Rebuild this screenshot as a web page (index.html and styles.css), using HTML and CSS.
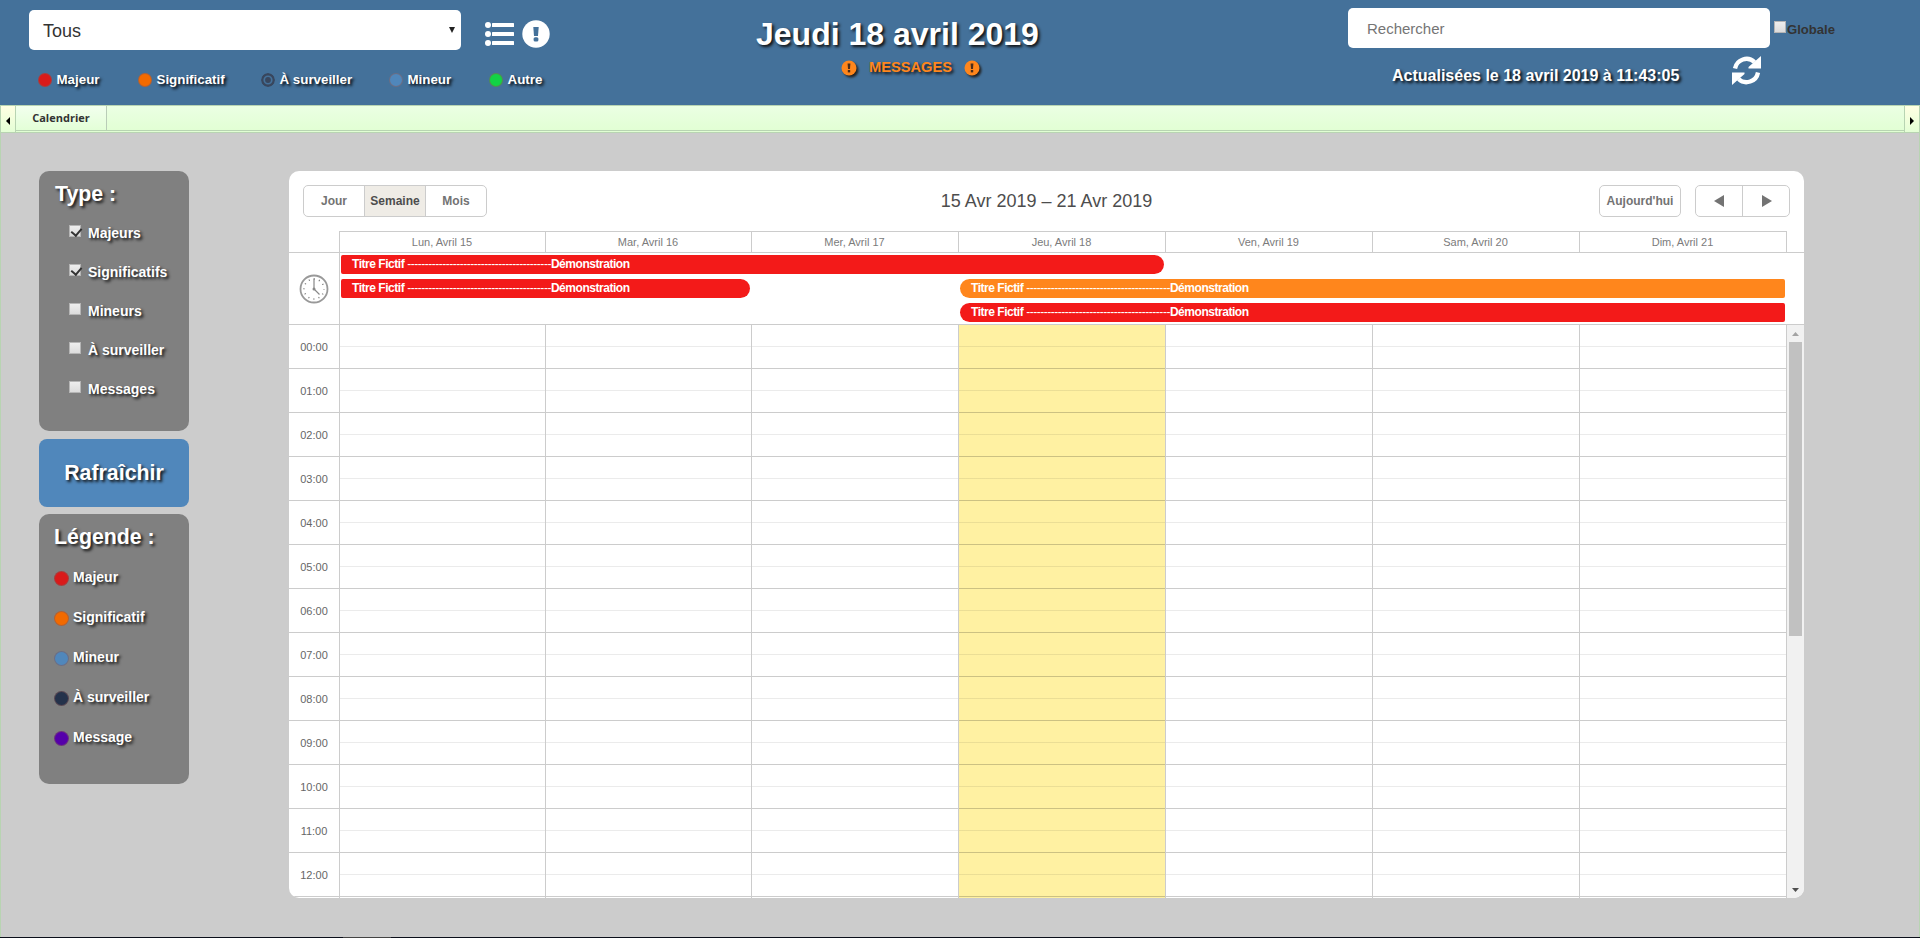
FILE: index.html
```html
<!DOCTYPE html>
<html lang="fr">
<head>
<meta charset="utf-8">
<title>Calendrier</title>
<link rel="stylesheet" href="styles.css">
</head>
<body>
<header class="header">
  <div class="filters">
    <div class="filter-row">
      <div class="select">Tous<svg class="caret" viewBox="0 0 6 6"><path d="M0 0h6L3 6z"/></svg></div>
      <svg class="icon-list" viewBox="0 0 29 24" fill="#fff"><circle cx="3" cy="3" r="3"/><circle cx="3" cy="12" r="3"/><circle cx="3" cy="21" r="3"/><rect x="7" y="1" width="22" height="4" rx=".5"/><rect x="7" y="10" width="22" height="4" rx=".5"/><rect x="7" y="19" width="22" height="4" rx=".5"/></svg>
      <svg class="icon-alert" viewBox="0 0 28 28"><circle cx="14" cy="14" r="13.700" fill="#fff"/><path fill="#44719a" d="M11.300 7h5.400l-.7 9h-4z"/><rect x="11.600" y="17.300" width="4.800" height="4.200" rx="1.500" fill="#44719a"/></svg>
    </div>
    <div class="keys">
      <span class="key"><i class="dot red"></i>Majeur</span>
      <span class="key"><i class="dot orange"></i>Significatif</span>
      <span class="key"><svg class="dot target" viewBox="0 0 14 14"><circle cx="7" cy="7" r="5.800" fill="none" stroke="#38465d" stroke-width="2.400"/><circle cx="7" cy="7" r="2.900" fill="#38465d"/></svg>À surveiller</span>
      <span class="key"><i class="dot blue"></i>Mineur</span>
      <span class="key"><i class="dot green"></i>Autre</span>
    </div>
  </div>
  <div class="heading">
    <h1>Jeudi 18 avril 2019</h1>
    <div class="messages">
      <svg class="badge" viewBox="0 0 16 16"><circle cx="8" cy="8" r="7.5" fill="#ff861c"/><path fill="#4a2c1a" d="M6.600 3.500h2.800L9 9H7z"/><rect x="6.800" y="10" width="2.400" height="2.400" fill="#4a2c1a"/></svg>
      <span>MESSAGES</span>
      <svg class="badge" viewBox="0 0 16 16"><circle cx="8" cy="8" r="7.5" fill="#ff861c"/><path fill="#4a2c1a" d="M6.600 3.500h2.800L9 9H7z"/><rect x="6.800" y="10" width="2.400" height="2.400" fill="#4a2c1a"/></svg>
    </div>
  </div>
  <div class="search">
    <div class="search-row"><div class="input">Rechercher</div><i class="check"></i><span class="globale">Globale</span></div>
    <div class="updated"><span>Actualisées le 18 avril 2019 à 11:43:05</span>
      <svg class="icon-refresh" viewBox="0 0 29 29" fill="none"><path d="M3 12.500A11.700 11.700 0 0 1 22.500 6M26 16.500A11.700 11.700 0 0 1 6.500 23" stroke="#fff" stroke-width="4.300"/><path d="M29 0v12.500H16.500V11zM0 29V16.500h12.500V18z" fill="#fff"/></svg>
    </div>
  </div>
</header>
<nav class="tabs">
  <div class="scroller"><svg viewBox="0 0 4 8"><path d="M4 0v8L0 4z"/></svg></div>
  <div class="tab">Calendrier</div>
  <div class="tab-space"></div>
  <div class="scroller end"><svg viewBox="0 0 4 8"><path d="M0 0v8l4-4z"/></svg></div>
</nav>
<main class="content">
  <aside class="sidebar">
    <section class="panel types">
      <h2>Type :</h2>
      <label><i class="check on"></i>Majeurs</label>
      <label><i class="check on"></i>Significatifs</label>
      <label><i class="check"></i>Mineurs</label>
      <label><i class="check"></i>À surveiller</label>
      <label><i class="check"></i>Messages</label>
    </section>
    <div class="refresh">Rafraîchir</div>
    <section class="panel legend">
      <h2>Légende :</h2>
      <div class="item"><i class="dot red"></i>Majeur</div>
      <div class="item"><i class="dot orange"></i>Significatif</div>
      <div class="item"><i class="dot blue"></i>Mineur</div>
      <div class="item"><i class="dot navy"></i>À surveiller</div>
      <div class="item"><i class="dot purple"></i>Message</div>
    </section>
  </aside>
  <section class="calendar">
    <div class="toolbar">
      <div class="group views"><span>Jour</span><span class="active">Semaine</span><span>Mois</span></div>
      <div class="range">15 Avr 2019 – 21 Avr 2019</div>
      <div class="nav">
        <div class="group today-btn"><span>Aujourd'hui</span></div>
        <div class="group arrows"><span><svg viewBox="0 0 10 12"><path d="M10 0v12L0 6z"/></svg></span><span><svg viewBox="0 0 10 12"><path d="M0 0v12l10-6z"/></svg></span></div>
      </div>
    </div>
    <div class="days"><span></span><span>Lun, Avril 15</span><span>Mar, Avril 16</span><span>Mer, Avril 17</span><span>Jeu, Avril 18</span><span>Ven, Avril 19</span><span>Sam, Avril 20</span><span>Dim, Avril 21</span><span class="gutter"></span></div>
    <div class="allday">
      <div class="clock-cell"><svg class="clock" viewBox="0 0 30 30"><circle cx="15" cy="15" r="13.500" fill="none" stroke="#999" stroke-width="1.800"/><circle cx="15" cy="15" r="10" fill="none" stroke="#777" stroke-width="1.500" stroke-dasharray="1 4.236" stroke-dashoffset=".5"/><path d="M15 4.500V15l5.500 5.500" fill="none" stroke="#888" stroke-width="1.200"/><circle cx="15" cy="15" r="1.500" fill="#888"/></svg></div>
      <div class="events">
        <div class="event e1">Titre Fictif <span>-----------------------------------------</span>Démonstration</div>
        <div class="event e2">Titre Fictif <span>-----------------------------------------</span>Démonstration</div>
        <div class="event e3">Titre Fictif <span>-----------------------------------------</span>Démonstration</div>
        <div class="event e4">Titre Fictif <span>-----------------------------------------</span>Démonstration</div>
      </div>
    </div>
    <div class="body">
      <div class="hours"><span>00:00</span><span>01:00</span><span>02:00</span><span>03:00</span><span>04:00</span><span>05:00</span><span>06:00</span><span>07:00</span><span>08:00</span><span>09:00</span><span>10:00</span><span>11:00</span><span>12:00</span><span></span></div>
      <div class="col"></div><div class="col"></div><div class="col"></div><div class="col today"></div><div class="col"></div><div class="col"></div><div class="col last"></div>
      <div class="scrollbar"><svg class="up" viewBox="0 0 7 4"><path d="M0 4h7L3.500 0z"/></svg><i class="thumb"></i><svg class="down" viewBox="0 0 7 4"><path d="M0 0h7L3.500 4z"/></svg></div>
    </div>
  </section>
</main>
<footer class="edge"><i></i></footer>
</body>
</html>
```

FILE: styles.css
```css
* { box-sizing: border-box; }
body {
  margin: 0;
  width: 1920px;
  height: 938px;
  overflow: hidden;
  display: flex;
  flex-direction: column;
  background: #ccc;
  font-family: "Liberation Sans", Arial, sans-serif;
}
svg { display: block; flex: none; }
h1, h2 { margin: 0; }

.header {
  height: 105px;
  background: #44719a;
  display: grid;
  grid-template-columns: 756px 592px 1fr;
  color: #fff;
  font-weight: bold;
}
.filters { padding: 10px 0 0 29px; }
.filter-row { display: flex; height: 40px; }
.select {
  width: 432px;
  height: 40px;
  border-radius: 5px;
  background: #fff;
  color: #333;
  font-size: 18px;
  font-weight: normal;
  line-height: 42px;
  padding: 0 6px 0 14px;
  display: flex;
  justify-content: space-between;
}
.caret { width: 6px; height: 6px; margin-top: 17px; fill: #222; }
.icon-list { width: 29px; height: 24px; margin: 12px 0 0 24px; }
.icon-alert { width: 28px; height: 28px; margin: 10px 0 0 8px; }
.keys {
  display: grid;
  grid-template-columns: 100px 123px 128px 100px 1fr;
  margin: 21px 0 0 9px;
  font-size: 13.33px;
  line-height: 18px;
}
.key { display: flex; align-items: center; text-shadow: 2px 2px 3px #000; }
.key .dot { margin-right: 4.5px; }
.dot { width: 14px; height: 14px; border-radius: 50%; margin-right: 5px; flex: none; border: 1px solid rgba(130, 90, 90, .55); }
.key .target { border: 0; }
.red { background: #d91a1a; }
.orange { background: #f26a00; }
.blue { background: #5087bb; }
.green { background: #12d345; }
.navy { background: #24324b; }
.purple { background: #5500aa; }

.heading { padding-top: 15px; width: 284px; }
.heading h1 { font-size: 32px; line-height: 38px; white-space: nowrap; text-shadow: 2px 2px 3px #111; }
.messages {
  display: flex;
  align-items: center;
  margin: 5px 0 0 85px;
  color: #ff861c;
  font-size: 14.67px;
  line-height: 17px;
  text-shadow: 2px 2px 3px #111;
}
.messages span { margin: 1px 12px; }
.badge { width: 16px; height: 16px; filter: drop-shadow(2px 2px 1px #222); }

.search { padding-top: 8px; }
.search-row { display: flex; }
.input {
  width: 422px;
  height: 40px;
  border-radius: 5px;
  background: #fff;
  color: #757575;
  font-size: 15px;
  font-weight: normal;
  line-height: 41px;
  padding-left: 19px;
}
.search-row .check { margin: 13px 1px 0 4px; }
.globale { color: #333; font-size: 13.1px; line-height: 17px; margin-top: 13px; }
.updated { display: flex; margin-left: 44px; font-size: 16px; line-height: 18px; text-shadow: 2px 2px 3px #000; }
.updated span { width: 340px; margin-top: 19px; white-space: nowrap; }
.icon-refresh { width: 29px; height: 29px; margin-top: 8px; }

.check {
  display: block;
  flex: none;
  width: 12px;
  height: 12px;
  border: 1px solid #b5b5b5;
  background: linear-gradient(#eee, #dcdcdc);
}
.on { position: relative; }
.on::after {
  content: "";
  position: absolute;
  left: 3px;
  top: 0;
  width: 5px;
  height: 8px;
  border: solid #333;
  border-width: 0 2px 2px 0;
  transform: rotate(40deg);
}

.tabs {
  height: 28px;
  display: flex;
  border: 1px solid #b8d4b2;
  background: linear-gradient(#ebffe3, #e1ffd3);
}
.scroller {
  width: 15px;
  border-right: 1px solid #b8d4b2;
  background: linear-gradient(#ffffe3, #e4ffd6);
  display: flex;
  align-items: center;
  justify-content: center;
  padding-top: 3px;
}
.scroller.end { border-right: 0; border-left: 1px solid #b8d4b2; }
.scroller svg { width: 4px; height: 8px; }
.tab {
  width: 91px;
  height: 25px;
  border-right: 1px solid #b9cdb7;
  border-bottom: 1px solid #b8d4b2;
  background: linear-gradient(#f2ffee, #e3ffd7);
  color: #333;
  font: bold 11px/23px "Open Sans", sans-serif;
  text-align: center;
}
.tab-space { flex: 1; height: 25px; border-bottom: 1px solid #b8d4b2; }

.content {
  height: 804px;
  padding: 38px 0 0 38px;
  border: solid #b8d4b2;
  border-width: 0 1px;
  display: flex;
  gap: 100px;
}
.sidebar { width: 150px; color: #fff; font-weight: bold; text-shadow: 2px 2px 3px #111; }
.panel { background: #808080; border-radius: 10px; }
.types { height: 260px; padding: 11px 0 0 16px; }
.panel h2, .refresh { font-size: 21.33px; line-height: 24px; }
.types label { display: flex; height: 39px; padding-left: 14px; font-size: 14px; line-height: 16px; }
.types label:first-of-type { margin-top: 19px; }
.types .check { margin-right: 7px; }
.refresh { height: 68px; margin: 8px 0 7px; border-radius: 8px; background: #5087bb; line-height: 69px; text-align: center; }
.legend { height: 270px; padding: 11px 0 0 15px; }
.legend .item { display: flex; height: 40px; font-size: 14px; line-height: 16px; }
.legend .item:nth-of-type(1) { margin-top: 20px; }
.legend .dot { width: 15px; height: 15px; margin: 2px 4px 0 0; }

.calendar { width: 1515px; height: 727px; border-radius: 10px; background: #fff; overflow: hidden; }
.toolbar {
  height: 60px;
  padding: 14px 14px 0;
  display: grid;
  grid-template-columns: 1fr auto 1fr;
}
.group { display: flex; height: 32px; border: 1px solid #ccc; border-radius: 5px; overflow: hidden; font-size: 12px; font-weight: bold; line-height: 30px; color: #737373; }
.group span { flex: 1; display: flex; justify-content: center; border-left: 1px solid #ccc; }
.group span:first-child { border-left: 0; }
.group .active { background: #efece6; color: #4d4d4d; }
.views { width: 184px; }
.range { font-size: 18px; line-height: 32px; color: #4d4d4d; }
.nav { display: flex; justify-content: flex-end; gap: 14px; }
.today-btn { width: 82px; }
.arrows { width: 95px; }
.arrows svg { width: 10px; height: 12px; fill: #737373; margin-top: 9px; }
.arrows span + span svg { margin-left: 1px; }

.days {
  display: grid;
  grid-template-columns: 50px 206px 206px 207px 207px 207px 207px 207px 18px;
  height: 22px;
  border-bottom: 1px solid #ccc;
  font-size: 11px;
  line-height: 21px;
  color: #7b7b7b;
  text-align: center;
}
.days span + span { border-left: 1px solid #ccc; border-top: 1px solid #ccc; padding-right: 1px; }
.days .gutter.gutter { border-top: 0; }
.allday { display: flex; height: 72px; border-bottom: 1px solid #ccc; }
.clock-cell { width: 51px; border-right: 1px solid #ccc; padding: 21px 0 0 10px; }
.clock { width: 30px; height: 30px; }
.events {
  display: grid;
  grid-template-columns: 205px 206px 207px 207px 207px 207px 207px;
  grid-template-rows: repeat(3, 19px);
  row-gap: 5px;
  padding-top: 2px;
}
.event {
  margin: 0 1px;
  padding-left: 11px;
  background: #f31a19;
  color: #fff;
  font-size: 12px;
  font-weight: bold;
  letter-spacing: -.46px;
  line-height: 19px;
  white-space: nowrap;
}
.event span { font-weight: normal; letter-spacing: -.49px; }
.e1 { grid-area: 1 / 1 / 2 / 5; border-radius: 2px 10px 10px 2px; }
.e2 { grid-area: 2 / 1 / 3 / 3; border-radius: 2px 10px 10px 2px; }
.e3 { grid-area: 2 / 4 / 3 / 8; border-radius: 10px 2px 2px 10px; background: #ff861c; margin-left: 2px; }
.e4 { grid-area: 3 / 4 / 4 / 8; border-radius: 10px 2px 2px 10px; margin-left: 2px; }

.body {
  display: grid;
  grid-template-columns: 50px 206px 206px 207px 207px 207px 207px 208px 17px;
  height: 573px;
}
.hours { overflow: hidden; height: 573px; }
.hours span { display: block; height: 44px; border-bottom: 1px solid #ccc; font-size: 11px; line-height: 44px; text-align: center; color: #666; }
.col {
  border-left: 1px solid #ccc;
  background: repeating-linear-gradient(transparent 0 21px, rgba(0, 0, 0, .08) 21px 22px, transparent 22px 43px, rgba(0, 0, 0, .2) 43px 44px);
}
.today { background-color: #fff1a2; }
.last { border-right: 1px solid #ccc; }
.scrollbar { background: #f1f1f1; display: flex; flex-direction: column; align-items: center; padding: 7px 0 6px; }
.scrollbar svg { width: 7px; height: 4px; }
.up { fill: #a3a3a3; }
.down { fill: #505050; margin-top: auto; }
.thumb { width: 13px; height: 294px; margin-top: 6px; background: #c1c1c1; }

.edge { height: 1px; background: #0b0f1a; padding-left: 343px; }
.edge i { display: block; width: 48px; height: 1px; background: #444; }
```
